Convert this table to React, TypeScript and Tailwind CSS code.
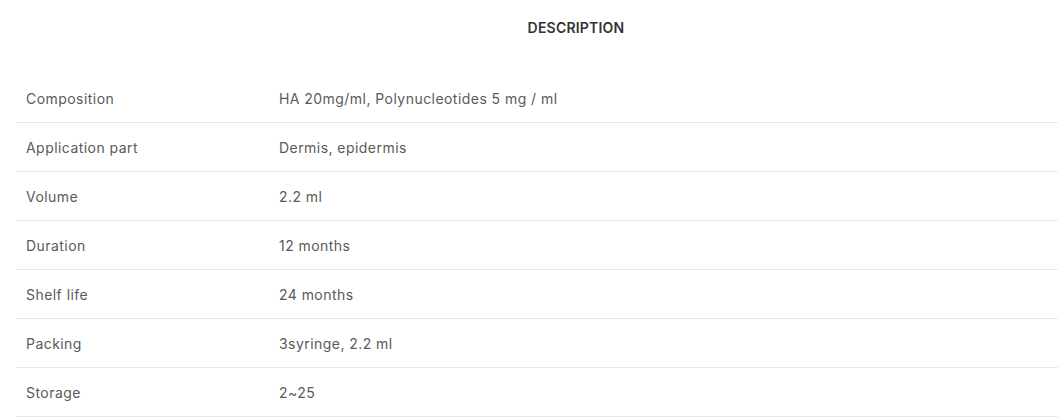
import React from "react";

const rows: [string, string][] = [
  ["Composition", "HA 20mg/ml, Polynucleotides 5 mg / ml"],
  ["Application part", "Dermis, epidermis"],
  ["Volume", "2.2 ml"],
  ["Duration", "12 months"],
  ["Shelf life", "24 months"],
  ["Packing", "3syringe, 2.2 ml"],
  ["Storage", "2~25"],
];

const App = () => {
  return (
    <div className="w-full h-[418px] overflow-hidden bg-white font-['Inter',sans-serif]">
      <div className="w-[1120px] ml-4">
        <h2 className="h-[74px] pt-[17px] text-center text-[14px] font-semibold tracking-[0.2px] text-[#333]">
          DESCRIPTION
        </h2>
        <div className="flex flex-col">
          {rows.map(([label, value]) => (
            <div
              key={label}
              className="flex items-center h-[49px] border-b border-[#e9e9e9] text-[14px] tracking-[0.45px] text-[#5a5a5a]"
            >
              <div className="w-[263px] pl-[10px] pt-[1px]">{label}</div>
              <div className="pt-[1px]">{value}</div>
            </div>
          ))}
        </div>
      </div>
    </div>
  );
};

export default App;
